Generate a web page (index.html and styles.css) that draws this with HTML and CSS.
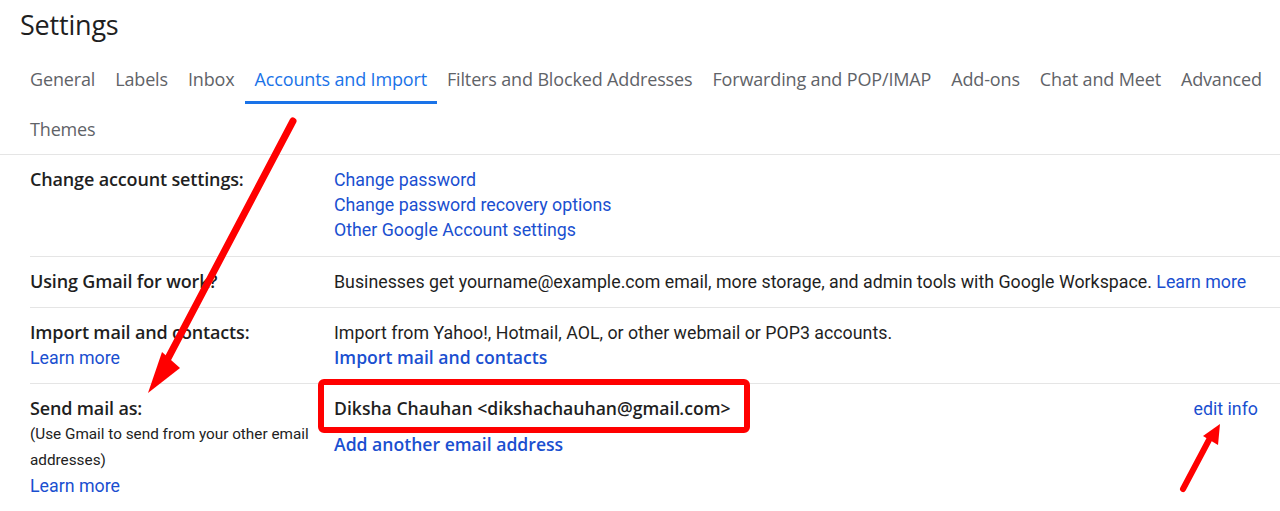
FILE: index.html
```html
<!DOCTYPE html>
<html>
<head>
<meta charset="utf-8">
<link rel="stylesheet" href="styles.css">
</head>
<body>
<div class="page">
  <h1 class="title">Settings</h1>
  <nav class="tabs">
    <div class="tab-row">
      <span class="tab">General</span>
      <span class="tab">Labels</span>
      <span class="tab">Inbox</span>
      <span class="tab active">Accounts and Import</span>
      <span class="tab">Filters and Blocked Addresses</span>
      <span class="tab">Forwarding and POP/IMAP</span>
      <span class="tab">Add-ons</span>
      <span class="tab">Chat and Meet</span>
      <span class="tab">Advanced</span>
    </div>
    <div class="tab-row">
      <span class="tab">Themes</span>
    </div>
  </nav>
  <div class="rows">
    <div class="row first">
      <div class="label"><b>Change account settings:</b></div>
      <div class="value">
        <a class="link">Change password</a>
        <a class="link">Change password recovery options</a>
        <a class="link">Other Google Account settings</a>
      </div>
    </div>
    <div class="row">
      <div class="label"><b>Using Gmail for work?</b></div>
      <div class="value"><span>Businesses get yourname@example.com email, more storage, and admin tools with Google Workspace. <a class="inline-link">Learn more</a></span></div>
    </div>
    <div class="row">
      <div class="label"><b>Import mail and contacts:</b><a class="link">Learn more</a></div>
      <div class="value">
        <span>Import from Yahoo!, Hotmail, AOL, or other webmail or POP3 accounts.</span>
        <a class="link strong">Import mail and contacts</a>
      </div>
    </div>
    <div class="row">
      <div class="label"><b>Send mail as:</b><span class="note">(Use Gmail to send from your other email addresses)</span><a class="link">Learn more</a></div>
      <div class="value send">
        <div class="account">
          <span class="name">Diksha Chauhan &lt;dikshachauhan@gmail.com&gt;</span>
          <a class="link edit">edit info</a>
        </div>
        <a class="link strong">Add another email address</a>
      </div>
    </div>
  </div>
  <svg class="annotations" width="1280" height="511" viewBox="0 0 1280 511">
    <rect x="321" y="382" width="426" height="48" rx="3" fill="none" stroke="#ff0000" stroke-width="6"/>
    <line x1="293" y1="121" x2="165" y2="364" stroke="#ff0000" stroke-width="7" stroke-linecap="round"/>
    <polygon points="162,352 180,368 148,393" fill="#ff0000"/>
    <line x1="1183" y1="489" x2="1210" y2="438" stroke="#ff0000" stroke-width="6" stroke-linecap="round"/>
    <polygon points="1203,436 1218,445 1220,424" fill="#ff0000"/>
  </svg>
</div>
</body>
</html>
```

FILE: styles.css
```css
* { box-sizing: border-box; }
html, body { margin: 0; padding: 0; background: #fff; }
body {
  font-family: Roboto, "Liberation Sans", sans-serif;
  color: #1f1f1f;
  width: 1280px;
  height: 511px;
  overflow: hidden;
}
.page { position: relative; width: 1280px; height: 511px; }
.title {
  margin: 0;
  padding: 7px 0 0 20px;
  height: 54px;
  font-family: "Open Sans", Roboto, sans-serif;
  font-weight: 400;
  font-size: 27px;
  line-height: 36px;
  color: #1f1f1f;
  letter-spacing: -0.2px;
}
.tabs {
  border-bottom: 1px solid #e5e5e5;
  padding-left: 20px;
}
.tab-row { display: flex; height: 50px; }
.tab {
  display: flex;
  align-items: center;
  padding: 3px 10px 0;
  font-family: "Open Sans", Roboto, sans-serif;
  font-size: 18px;
  color: #5f6368;
  border-bottom: 3px solid transparent;
  letter-spacing: -0.15px;
}
.tab.active { color: #1a73e8; border-bottom-color: #1a73e8; }
.rows { padding-left: 30px; }
.row {
  display: flex;
  border-bottom: 1px solid #e5e5e5;
  padding: 12px 0 13px;
  font-size: 17.8px;
  line-height: 25px;
}
.row.first { padding-bottom: 14px; }
.label { width: 304px; flex: none; display: flex; flex-direction: column; }
.label b {
  font-family: "Open Sans", Roboto, sans-serif;
  font-weight: 600;
  font-size: 18px;
  color: #1f1f1f;
  letter-spacing: -0.15px;
}
.value { flex: 1; display: flex; flex-direction: column; align-items: flex-start; color: #1f1f1f; }
.link { color: #1a4fd0; text-decoration: none; }
.inline-link { color: #1a4fd0; }
.link.strong {
  font-family: "Open Sans", Roboto, sans-serif;
  font-weight: 600;
  font-size: 17.6px;
  color: #1a4fd0;
}
.note { font-size: 15.3px; line-height: 26px; color: #222; }
.value.send { padding-right: 22px; align-items: stretch; }
.account { display: flex; justify-content: space-between; margin-bottom: 11px; }
.name {
  font-family: "Open Sans", Roboto, sans-serif;
  font-weight: 600;
  font-size: 17.6px;
  color: #1f1f1f;
}
.value.send > .link.strong { align-self: flex-start; }
.annotations { position: absolute; left: 0; top: 0; pointer-events: none; }
```
